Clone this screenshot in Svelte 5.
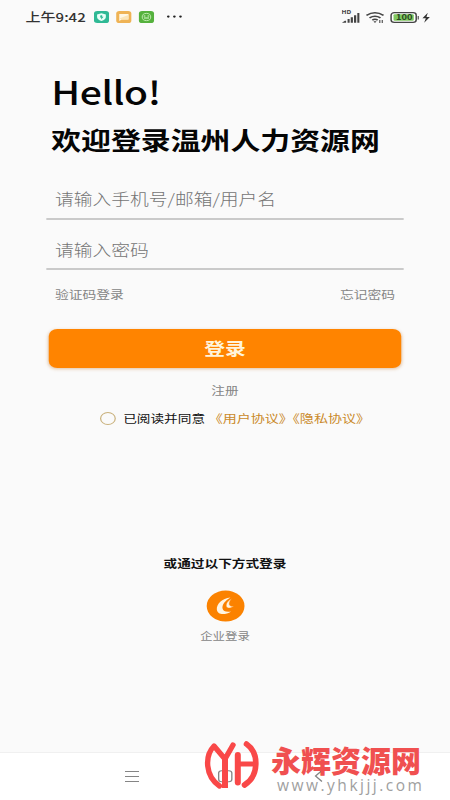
<script lang="ts">
  let account = "";
  let password = "";
  const title = "欢迎登录温州人力资源网";
</script>

<div class="page">
  <main class="screen">
    <header class="status">
      <span class="time">上午9:42</span>
      <svg class="apps" width="78" height="14" viewBox="0 0 78 14">
        <rect x="0" y="1" width="12.4" height="12" rx="2.6" fill="#2fb995" />
        <path d="M6.2 3.2l3.6 1.2v2.7q0 2.6-3.6 4q-3.6-1.4-3.6-4V4.4z" fill="#e9fff8" />
        <path d="M5.4 5.2h1.4v1.6h1.1L6 9.4V7.5H5z" fill="#2fb995" />
        <rect x="18.3" y="1" width="12.4" height="12" rx="2.6" fill="#efb355" />
        <path d="M20.8 4h7.6v5.6h-5.6l-2 1.4z" fill="#fff7e4" />
        <path d="M20.8 8.6l7.4-3.6v4.6h-5z" fill="#fbe5b8" />
        <rect x="36.9" y="1" width="12.4" height="12" rx="2.6" fill="#55b13d" />
        <ellipse cx="43.1" cy="7" rx="3.5" ry="3.6" fill="none" stroke="#c9f0b9" stroke-width=".8" />
        <path d="M40.8 6h1.4M44 6h1.4M41 8h4.2" fill="none" stroke="#e0fad4" stroke-width=".9" />
        <circle cx="61" cy="6.6" r="1.1" fill="#222" />
        <circle cx="66" cy="6.6" r="1.1" fill="#222" />
        <circle cx="71" cy="6.6" r="1.1" fill="#222" />
      </svg>
      <svg class="signals" width="75" height="16" viewBox="0 0 75 16">
        <text x="0" y="5.4" font-size="5.4" font-weight="700" fill="#444">HD</text>
        <path d="M.4 13.7l2.4-2h1v2zM5 10h1.7v3.7H5zM7.6 8.2h1.8v5.5H7.6zM10.3 6.3h1.8v7.4h-1.8zM13 4h1.7v9.7H13z" fill="#444" />
        <path d="M20.5 6.3q7-5 14 0M23 8.9q4.5-3.3 9 0M25.3 11.2q2.2-1.7 4.4 0" fill="none" stroke="#444" stroke-width="1.5" />
        <path d="M26.2 12.2h2.6l-1.3 1.7zM31 11h.9v3H31zM33 11h.9v3H33z" fill="#444" />
        <rect x="40.7" y="3.6" width="20.6" height="9.8" rx="2.6" fill="#fff" stroke="#444" stroke-width="1.2" />
        <rect x="42.7" y="5.3" width="16.6" height="6.4" rx="1" fill="#80c860" />
        <path d="M62.5 7v3.5h.9V7z" fill="#444" />
        <text x="44.8" y="11.4" font-size="7.6" font-weight="700" fill="#29491f">100</text>
        <path d="M70.8 3.8l-4.4 5.5h2.8l-1.4 4.5 4.7-5.9h-2.8z" fill="#333" />
      </svg>
    </header>

    <section class="welcome">
      <h1>Hello!</h1>
      <h2>{title}</h2>
    </section>

    <form class="login">
      <input type="text" placeholder="请输入手机号/邮箱/用户名" bind:value={account} />
      <input type="password" placeholder="请输入密码" bind:value={password} />
      <div class="links">
        <span>验证码登录</span>
        <span>忘记密码</span>
      </div>
      <button type="button">登录</button>
    </form>

    <div class="register">注册</div>
    <div class="agree">
      <span class="radio"></span>
      <span class="read">已阅读并同意</span>
      <span class="terms">《用户协议》《隐私协议》</span>
    </div>

    <section class="other">
      <div class="tip">或通过以下方式登录</div>
      <svg class="company" width="32" height="32" viewBox="0 0 32 32">
        <circle cx="16" cy="16" r="15.5" fill="#fb8200" />
        <path d="M20 7.500C13 8.500 8.500 14 8.800 19.500C9.200 25 15.500 25.500 20.500 21.500C16.500 22.300 14 21.300 13.500 18.500C12.900 15 15.500 10.500 20 7.500z" fill="#fff5e2" />
        <path d="M21 8.500C18 10.500 16.200 13.300 16.500 16C16.900 18.800 20 18.700 22.800 16.300C20.800 16.600 19.300 16 19 14.300C18.800 12.600 19.700 10.300 21 8.500z" fill="#fff5e2" stroke="#fb8200" stroke-width=".4" />
      </svg>
      <div class="name">企业登录</div>
    </section>

    <nav>
      <svg width="369" height="47" viewBox="0 0 369 47" fill="none" stroke="#858585" stroke-width="1.1">
        <path d="M102.500 18.500h11.500M102.500 23.500h11.500M102.500 28.500h11.500" />
        <rect x="179.300" y="17.700" width="10.800" height="11" rx="2.400" />
        <path d="M264 17.500l-5.300 5.500 5.300 5.500" />
      </svg>
    </nav>
  </main>

  <div class="mark">
    <svg width="58" height="50" viewBox="0 0 58 50" fill="none" stroke="#f94848" stroke-linecap="round">
      <path d="M16.500 46C2 36 1.500 16 11 6L22 19L30 5" stroke-width="5.400" stroke-linejoin="round" />
      <path d="M22 17V48" stroke-width="6" stroke-linecap="butt" />
      <path d="M34.800 15V42.500" stroke-width="6" />
      <path d="M34.800 24H53" stroke-width="5" stroke-linecap="butt" />
      <path d="M43.500 4C56.500 13 56 36 41.500 45" stroke-width="5.600" />
    </svg>
    <div class="site">
      <strong>永辉资源网</strong>
      <span>www.yhkjjj.com</span>
    </div>
  </div>
</div>

<style>
  :global(body) {
    background: #fafafa;
  }
  .page {
    position: relative;
    width: 450px;
    height: 800px;
    overflow: hidden;
    background: #fafafa;
    font-family: "Noto Sans CJK SC", "Noto Sans", sans-serif;
  }
  /* tall phone screen, widened to the page */
  .screen {
    display: flex;
    flex-direction: column;
    width: 369px;
    height: 800px;
    transform: scaleX(1.2195);
    transform-origin: 0 0;
  }
  .status {
    display: flex;
    align-items: center;
    height: 34px;
    padding: 0 14px 0 21px;
    color: #333;
  }
  .time {
    width: 55.5px;
    font-size: 12.3px;
    font-weight: 500;
    white-space: nowrap;
  }
  .signals {
    margin-left: auto;
  }
  .welcome {
    padding: 32px 0 0 42px;
  }
  h1, h2 {
    margin: 0;
    color: #050505;
    white-space: nowrap;
  }
  h1 {
    font-size: 32px;
    font-weight: 500;
    line-height: 50px;
    letter-spacing: -0.3px;
  }
  h2 {
    margin-top: 2px;
    font-size: 24.5px;
    font-weight: 700;
    line-height: 44px;
  }
  .login {
    display: flex;
    flex-direction: column;
    margin: 16px 38px 0;
  }
  input {
    box-sizing: border-box;
    height: 42px;
    padding: 0 7px;
    border: 0;
    border-bottom: 2px solid #cacaca;
    outline: none;
    background: transparent;
    font-family: inherit;
    font-size: 15.4px;
    font-weight: 300;
  }
  input + input {
    margin-top: 8px;
    padding-top: 1px;
  }
  input::placeholder {
    color: #747474;
  }
  .links {
    display: flex;
    justify-content: space-between;
    padding: 15px 7px 0;
    font-size: 11.3px;
    line-height: 18px;
    color: #858585;
  }
  button {
    height: 39px;
    margin: 26px 2px 0;
    padding: 0 0 2px;
    border: 0;
    border-radius: 7px;
    background: #ff8400;
    box-shadow: 0 1px 3px rgba(190, 110, 30, 0.4);
    color: #fff4dc;
    font-family: inherit;
    font-size: 17px;
    font-weight: 700;
  }
  .register {
    margin-top: 12px;
    text-align: center;
    font-size: 11.2px;
    line-height: 20px;
    color: #858585;
  }
  .agree {
    display: flex;
    align-items: center;
    height: 20px;
    margin-top: 8px;
    padding-left: 82px;
    font-size: 11.2px;
    white-space: nowrap;
  }
  .radio {
    width: 11px;
    height: 11px;
    border: 1px solid #c9b17c;
    border-radius: 50%;
  }
  .read {
    margin-left: 6px;
    color: #111;
  }
  .terms {
    margin-left: 3px;
    font-size: 11.5px;
    color: #ca8a2a;
  }
  .other {
    display: flex;
    flex-direction: column;
    align-items: center;
    margin-top: 125px;
  }
  .tip {
    font-size: 11.2px;
    font-weight: 700;
    line-height: 20px;
    color: #111;
  }
  .company {
    margin-top: 17px;
  }
  .name {
    margin-top: 5px;
    font-size: 10.2px;
    line-height: 18px;
    color: #858585;
  }
  nav {
    height: 47px;
    margin-top: auto;
    background: #fff;
    box-shadow: 0 -1px 0 #f0f0f0;
  }
  nav svg {
    display: block;
  }
  /* site mark over the bottom bar */
  .mark {
    position: absolute;
    left: 203px;
    top: 740px;
    display: flex;
  }
  .site {
    display: flex;
    flex-direction: column;
    margin-left: 10px;
    white-space: nowrap;
  }
  .site strong {
    font-size: 30px;
    font-weight: 900;
    line-height: 38px;
    color: #f05050;
  }
  .site span {
    margin: -2px 0 0 6px;
    font-family: "Open Sans", sans-serif;
    font-size: 15.5px;
    line-height: 18px;
    letter-spacing: 2.5px;
    color: #a0a0a0;
  }
</style>
